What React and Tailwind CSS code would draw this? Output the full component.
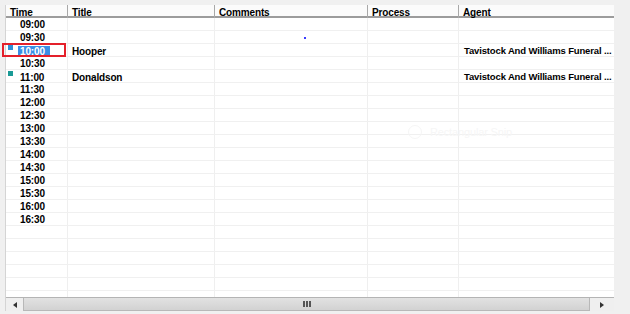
import React from "react";

// Grid de citas del día: columnas fijas, filas de 13px y barra de scroll horizontal.
const COLS = "grid-cols-[62px_147px_153px_91px_156px]";

const HEADERS = ["Time", "Title", "Comments", "Process", "Agent"];

const TIMES = [
  "09:00", "09:30", "10:00", "10:30", "11:00", "11:30", "12:00", "12:30",
  "13:00", "13:30", "14:00", "14:30", "15:00", "15:30", "16:00", "16:30",
];

const BOOKINGS = {
  "10:00": { title: "Hooper", agent: "Tavistock And Williams Funeral ...", mark: "bg-[#2f8fd6]", selected: true },
  "11:00": { title: "Donaldson", agent: "Tavistock And Williams Funeral ...", mark: "bg-[#1a9a96]" },
};

const rows = [...TIMES, "", "", "", "", "", ""];

function Row({ time }) {
  const b = BOOKINGS[time];
  return (
    <div className={`grid ${COLS} h-[13px] border-b border-[#f0f0f0]`}>
      <div className="flex items-center border-r border-[#efefef] pl-[2px]">
        <span className={`h-[5px] w-[5px] self-start mt-[1px] shrink-0 ${b ? b.mark : ""}`} />
        {time && (
          <span
            className={`leading-[11px] ${
              b && b.selected ? "ml-[5px] bg-[#3a8ee6] pl-[2px] pr-[5px] text-white" : "ml-[7px]"
            }`}
          >
            {time}
          </span>
        )}
      </div>
      <div className="flex items-center border-r border-[#efefef] pl-[4px]">{b?.title}</div>
      <div className="border-r border-[#efefef]" />
      <div className="border-r border-[#efefef]" />
      <div className="flex items-center whitespace-nowrap pl-[5px] text-[9.5px] tracking-[-0.15px]">{b?.agent}</div>
    </div>
  );
}

export default function App() {
  return (
    <div
      className="relative flex h-[314px] w-[630px] flex-col overflow-hidden bg-[#f0f0f0] pl-[5px] pr-[16px] pt-[5px] text-[10px] font-bold tracking-[-0.15px] text-black"
      style={{ fontFamily: '"Liberation Sans", Arial, sans-serif' }}
    >
      <div className="flex flex-1 flex-col border-l border-[#d4d4d4] bg-white">
        {/* cabecera */}
        <div className={`grid ${COLS} h-[13px] border-b-2 border-[#9c9c9c] bg-[#fbfbfb]`}>
          {HEADERS.map((h) => (
            <div key={h} className="flex items-center border-r border-[#a8a8a8] pl-[4px] last:border-r-0">
              {h}
            </div>
          ))}
        </div>

        <div className="h-[279px] overflow-hidden">
          {rows.map((t, i) => (
            <Row key={i} time={t} />
          ))}
        </div>

        {/* scroll horizontal */}
        <div className="flex h-[14px] border-t border-[#b4b4b4] bg-[#ececec]">
          <div className="flex w-[17px] items-center justify-center bg-[#efefef]">
            <span className="h-0 w-0 border-y-[3px] border-r-[4px] border-y-transparent border-r-[#333]" />
          </div>
          <div className="flex flex-1 items-center justify-center border border-t-0 border-[#b8b8b8] bg-gradient-to-b from-[#e2e2e2] to-[#d2d2d2]">
            <div className="flex gap-[1px]">
              <span className="h-[6px] w-[2px] bg-[#555]" />
              <span className="h-[6px] w-[2px] bg-[#555]" />
              <span className="h-[6px] w-[2px] bg-[#555]" />
            </div>
          </div>
          <div className="flex w-[24px] items-center justify-center bg-[#efefef]">
            <span className="h-0 w-0 border-y-[3px] border-l-[4px] border-y-transparent border-l-[#333]" />
          </div>
        </div>
      </div>
      <div className="h-[3px]" />

      {/* marco de selección */}
      <div className="absolute left-[2px] top-[43px] h-[14px] w-[64px] border-2 border-[#e4202a]" />
      <div className="absolute left-[304px] top-[37px] h-[2px] w-[2px] bg-[#3a3aff]" />

      {/* marca de agua casi invisible */}
      <div className="absolute left-[408px] top-[124px] flex items-center gap-[8px] text-[11px] font-normal text-[#f6f6f6]">
        <span className="h-[14px] w-[14px] rounded-full border border-[#f6f6f6]" />
        Rectangular Snip
      </div>
    </div>
  );
}
